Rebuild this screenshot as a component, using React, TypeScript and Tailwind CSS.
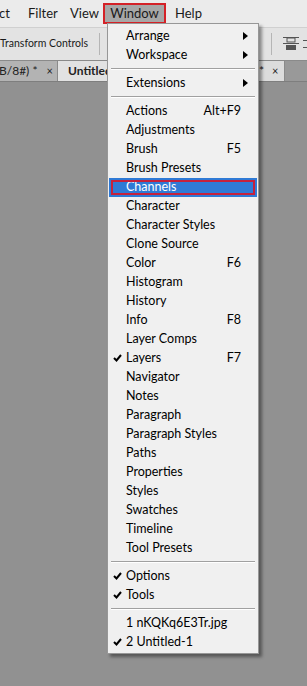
const font = "font-['Lato','Liberation_Sans',Arial,sans-serif]"

type Row =
    | { kind: 'sep' }
    | { kind: 'item'; label: string; shortcut?: string; sub?: boolean; checked?: boolean; active?: boolean }

const rows: Row[] = [
    { kind: 'item', label: 'Arrange', sub: true },
    { kind: 'item', label: 'Workspace', sub: true },
    { kind: 'sep' },
    { kind: 'item', label: 'Extensions', sub: true },
    { kind: 'sep' },
    { kind: 'item', label: 'Actions', shortcut: 'Alt+F9' },
    { kind: 'item', label: 'Adjustments' },
    { kind: 'item', label: 'Brush', shortcut: 'F5' },
    { kind: 'item', label: 'Brush Presets' },
    { kind: 'item', label: 'Channels', active: true },
    { kind: 'item', label: 'Character' },
    { kind: 'item', label: 'Character Styles' },
    { kind: 'item', label: 'Clone Source' },
    { kind: 'item', label: 'Color', shortcut: 'F6' },
    { kind: 'item', label: 'Histogram' },
    { kind: 'item', label: 'History' },
    { kind: 'item', label: 'Info', shortcut: 'F8' },
    { kind: 'item', label: 'Layer Comps' },
    { kind: 'item', label: 'Layers', shortcut: 'F7', checked: true },
    { kind: 'item', label: 'Navigator' },
    { kind: 'item', label: 'Notes' },
    { kind: 'item', label: 'Paragraph' },
    { kind: 'item', label: 'Paragraph Styles' },
    { kind: 'item', label: 'Paths' },
    { kind: 'item', label: 'Properties' },
    { kind: 'item', label: 'Styles' },
    { kind: 'item', label: 'Swatches' },
    { kind: 'item', label: 'Timeline' },
    { kind: 'item', label: 'Tool Presets' },
    { kind: 'sep' },
    { kind: 'item', label: 'Options', checked: true },
    { kind: 'item', label: 'Tools', checked: true },
    { kind: 'sep' },
    { kind: 'item', label: '1 nKQKq6E3Tr.jpg' },
    { kind: 'item', label: '2 Untitled-1', checked: true },
]

function Check() {
    return (
        <svg width="9" height="8" viewBox="0 0 9 8">
            <path d="M1 4 L3.5 6.5 L8 1" stroke="#000" strokeWidth="2" fill="none" />
        </svg>
    )
}

function Arrow() {
    return (
        <svg width="5" height="8" viewBox="0 0 5 8">
            <path d="M0 0 L5 4 L0 8 Z" fill="#000" />
        </svg>
    )
}

function WindowMenu() {
    return (
        <div className="absolute left-[107px] top-[23px] w-[152px] bg-[#f0f0f0] border border-[#979797] pt-[3px] pb-[1px] shadow-[3px_3px_3px_rgba(0,0,0,0.4)]">
            {rows.map((row, i) =>
                row.kind === 'sep' ? (
                    <div key={i} className="h-[9px] pt-[3px] px-[3px]">
                        <div className="h-px bg-[#a0a0a0]" />
                        <div className="h-px bg-white" />
                    </div>
                ) : (
                    <div key={i} className="h-[19px] px-[1px]">
                        <div
                            className={
                                'relative h-full flex items-center pb-[1px] ' +
                                (row.active ? 'bg-[#2f7ad5] text-white' : 'text-black')
                            }
                        >
                            {row.active ? (
                                <div className="absolute inset-[2px] border-2 border-[#c5213c]" />
                            ) : null}
                            <span className="w-[17px] flex justify-center">
                                {row.checked ? <Check /> : null}
                            </span>
                            <span className="flex-1 text-[12.5px] leading-none">{row.label}</span>
                            {row.shortcut ? (
                                <span className="text-[12.5px] leading-none pr-[16px]">{row.shortcut}</span>
                            ) : null}
                            {row.sub ? (
                                <span className="pr-[9px] flex items-center">
                                    <Arrow />
                                </span>
                            ) : null}
                        </div>
                    </div>
                )
            )}
        </div>
    )
}

export default function App() {
    return (
        <div className={`relative w-[307px] h-[686px] overflow-hidden bg-[#919191] ${font}`}>
            {/* menu bar */}
            <div className="h-[27px] bg-[#ebebeb] flex items-center text-[13px] text-[#1a1a1a]">
                <span className="w-[28px] ml-[-1px]">ct</span>
                <span className="w-[43px] pl-[1px]">Filter</span>
                <span className="w-[33px]">View</span>
                <span className="h-[21px] w-[63px] border-2 border-[#d42127] bg-[#a7a7a7] flex items-center justify-center">
                    Window
                </span>
                <span className="ml-[9px]">Help</span>
            </div>

            {/* options bar */}
            <div className="h-[34px] bg-[#e3e3e3] border-t border-[#d0d0d0] border-b border-b-[#8a8a8a] flex items-center text-[10.5px] text-[#1a1a1a]">
                <span>Transform Controls</span>
                <div className="ml-[11px] w-px h-[22px] bg-[#b5b5b5]" />
                <div className="flex-1" />
                <div className="w-px h-[22px] bg-[#b5b5b5] mr-[11px]" />
                <svg width="16" height="16" viewBox="0 0 16 16" className="mr-[4px]">
                    <rect x="0" y="1" width="16" height="1" fill="#555" />
                    <rect x="4" y="2" width="8" height="4" fill="none" stroke="#555" strokeWidth="1" />
                    <rect x="0" y="7" width="16" height="1" fill="#555" />
                    <rect x="3" y="9" width="10" height="5" fill="#555" />
                </svg>
                <div className="w-[4px] h-[8px] border-t border-b border-[#555]" />
            </div>

            {/* tabs */}
            <div className="h-[21px] bg-[#999999] flex text-[12px] border-b border-[#7e7e7e]">
                <div className="w-[58px] bg-[#b3b3b3] flex items-center border-r border-[#8a8a8a] text-[#222]">
                    <span className="ml-[-1px]">B/8#) *</span>
                    <span className="ml-[9px] text-[11px]">×</span>
                </div>
                <div className="w-[60px] bg-[#e2e2e2] flex items-center pl-[10px] font-bold text-[#222] whitespace-nowrap">
                    Untitled
                </div>
                <div className="flex-1" />
                <div className="w-[27px] bg-[#dcdcdc] flex items-center text-[#222] border-r border-[#8a8a8a]">
                    <span className="ml-[1px]">*</span>
                    <span className="ml-[8px] text-[11px]">×</span>
                </div>
                <div className="w-[22px]" />
            </div>

            <WindowMenu />
        </div>
    )
}
